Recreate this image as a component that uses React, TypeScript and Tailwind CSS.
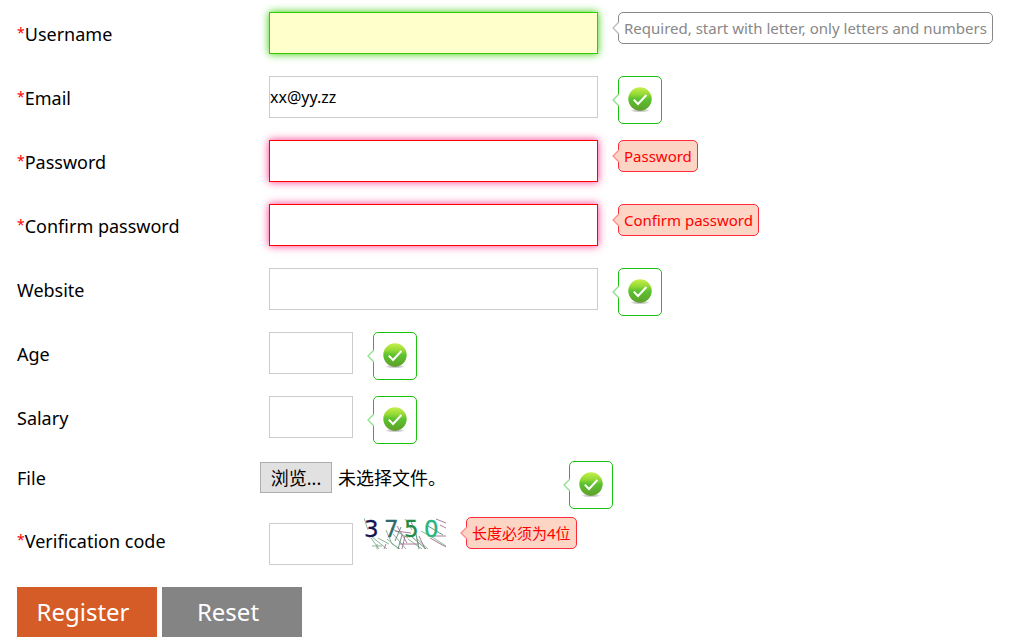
import type { InputHTMLAttributes, ReactNode } from "react";

type Tone = "hint" | "ok" | "error";

const bubbleTone: Record<Tone, string> = {
  hint: "border-[#888888] bg-white text-[#888888]",
  ok: "border-[#1bc10d] bg-white text-[#1bc10d]",
  error: "border-[#ff2a3c] bg-[#fdd5c5] text-[#ff0000]",
};

const arrowStroke: Record<Tone, string> = {
  hint: "#bbbbbb",
  ok: "#8fe08a",
  error: "#ff8a8f",
};

function Bubble({ tone, children }: { tone: Tone; children: ReactNode }) {
  return (
    <div
      className={`relative ml-5 shrink-0 rounded-[5px] border p-[5px] text-[15px] leading-5 whitespace-nowrap ${bubbleTone[tone]}`}
    >
      {children}
      <svg
        className="absolute top-1/2 -left-[7px] -mt-[7px]"
        width="8"
        height="14"
        viewBox="0 0 8 14"
        aria-hidden="true"
      >
        <path d="M8 0.5 L7 1 L1 7 L7 13 L8 13.5 Z" fill={tone === "error" ? "#fdd5c5" : "#ffffff"} />
        <path d="M7 1 L1 7 L7 13" fill="none" stroke={arrowStroke[tone]} strokeWidth="1.3" />
      </svg>
    </div>
  );
}

function OkBubble() {
  return (
    <Bubble tone="ok">
      <svg className="my-px block" width="32" height="34" viewBox="0 0 32 34" role="img" aria-label="OK">
        <defs>
          <linearGradient id="okFill" x1="0" y1="0" x2="0" y2="1">
            <stop offset="0" stopColor="#c4f04a" />
            <stop offset="0.3" stopColor="#96d936" />
            <stop offset="0.5" stopColor="#5cc22f" />
            <stop offset="1" stopColor="#5fa02a" />
          </linearGradient>
          <radialGradient id="okShadow">
            <stop offset="0" stopColor="#777777" stopOpacity="0.7" />
            <stop offset="0.7" stopColor="#999999" stopOpacity="0.35" />
            <stop offset="1" stopColor="#ffffff" stopOpacity="0" />
          </radialGradient>
        </defs>
        <ellipse cx="16" cy="27.5" rx="11" ry="2" fill="url(#okShadow)" />
        <circle cx="16" cy="16" r="11.7" fill="url(#okFill)" />
        <path d="M9.8 16.6 L14 21 L22.4 12" fill="none" stroke="#ffffff" strokeWidth="2" />
      </svg>
    </Bubble>
  );
}

function Captcha() {
  return (
    <svg className="ml-[11px] block shrink-0" width="82" height="32" viewBox="0 0 82 32" role="img" aria-label="3750">
      <g fill="none" strokeWidth="0.9">
        <g stroke="#7fae8c">
          <path d="M0 1 L4 13 M8 20 L23 32 M8 29 H18 M13 27 V32 M7 21 L15 32 M14 21 L25 27" />
          <path d="M22 13 L28 27 L36 32 M27 11 L44 21 M23 22 L35 32 M41 2 L48 13 M57 14 L68 20 L82 29" />
          <path d="M29 17 L42 32 M44 22 L58 32 M52 21 L64 32" />
        </g>
        <g stroke="#a2708f">
          <path d="M31 14 L47 16 M36 27 H55 M41 19 L38 32 M72 2 L82 6 M68 19 H82 M66 21 L82 30" />
          <path d="M33 9 L43 26 M55 19 L61 32 M76 8 L82 11 M20 32 L22 27 M47 5 L52 15" />
        </g>
        <g stroke="#5b8a75">
          <path d="M37 10 L31 24 M52 17 L55 32 M48 20 L62 32 M64 9 L79 18 M38 18 L34 32" />
        </g>
      </g>
      <g fontFamily="'DejaVu Sans', sans-serif" fontSize="23" strokeWidth="0.3">
        <text x="0" y="20" fill="#17134d" stroke="#17134d">3</text>
        <text x="20" y="20" fill="#2f6a6d" stroke="#2f6a6d">7</text>
        <text x="40" y="20" fill="#228c46" stroke="#228c46">5</text>
        <text x="60" y="20" fill="#22b57c" stroke="#22b57c">0</text>
      </g>
    </svg>
  );
}

function Label({ htmlFor, required, children }: { htmlFor: string; required?: boolean; children: ReactNode }) {
  return (
    <label htmlFor={htmlFor} className="w-[252px] shrink-0">
      {required && <span className="align-[3px] text-sm leading-none text-[#ff0000]">*</span>}
      {children}
    </label>
  );
}

const plain = "border-[#cccccc] bg-white";
const focused = "border-[#33cc00] bg-[#ffffcc] shadow-[0_0_8px_#33cc00]";
const invalid = "border-[#ff0000] bg-white shadow-[0_0_8px_#ff3388]";

function TextBox({ look = plain, small, ...rest }: { look?: string; small?: boolean } & InputHTMLAttributes<HTMLInputElement>) {
  return (
    <input
      {...rest}
      className={`h-[42px] min-w-0 border text-base text-black outline-none ${small ? "w-[84px]" : "w-[329px]"} ${look}`}
    />
  );
}

function Row({ children }: { children: ReactNode }) {
  return <div className="flex h-16 items-start leading-[44px]">{children}</div>;
}

export default function App() {
  return (
    <form
      className="bg-white pt-3 pl-[17px] font-['Noto_Sans','Noto_Sans_CJK_SC',sans-serif] text-lg text-black"
      onSubmit={(e) => e.preventDefault()}
    >
      <Row>
        <Label htmlFor="username" required>Username</Label>
        <TextBox id="username" look={focused} />
        <Bubble tone="hint">Required, start with letter, only letters and numbers</Bubble>
      </Row>
      <Row>
        <Label htmlFor="email" required>Email</Label>
        <TextBox id="email" type="email" defaultValue="xx@yy.zz" />
        <OkBubble />
      </Row>
      <Row>
        <Label htmlFor="password" required>Password</Label>
        <TextBox id="password" type="password" look={invalid} />
        <Bubble tone="error">Password</Bubble>
      </Row>
      <Row>
        <Label htmlFor="confirm" required>Confirm password</Label>
        <TextBox id="confirm" type="password" look={invalid} />
        <Bubble tone="error">Confirm password</Bubble>
      </Row>
      <Row>
        <Label htmlFor="website">Website</Label>
        <TextBox id="website" type="url" />
        <OkBubble />
      </Row>
      <Row>
        <Label htmlFor="age">Age</Label>
        <TextBox id="age" small />
        <OkBubble />
      </Row>
      <Row>
        <Label htmlFor="salary">Salary</Label>
        <TextBox id="salary" small />
        <OkBubble />
      </Row>

      <div className="mt-px flex h-14 items-start leading-[34px]">
        <label htmlFor="file" className="w-[243px] shrink-0">File</label>
        <label className="relative flex w-[289px] items-center pt-px leading-7">
          <input id="file" type="file" className="sr-only" />
          <span className="flex h-[31px] w-[72px] items-center justify-center border border-[#adadad] bg-[#e1e1e1]">
            浏览...
          </span>
          <span className="ml-1.5">未选择文件。</span>
        </label>
        <OkBubble />
      </div>

      <div className="flex h-[70px] items-start leading-[48px]">
        <Label htmlFor="code" required>Verification code</Label>
        <div className="flex pt-1.5">
          <TextBox id="code" small />
        </div>
        <Captcha />
        <Bubble tone="error">长度必须为4位</Bubble>
      </div>

      <div className="flex gap-[5px] text-2xl text-white">
        <button type="submit" className="h-[50px] w-[140px] bg-[#d55c26] pr-2">Register</button>
        <button type="reset" className="h-[50px] w-[140px] bg-[#848484] pr-2">Reset</button>
      </div>
    </form>
  );
}
